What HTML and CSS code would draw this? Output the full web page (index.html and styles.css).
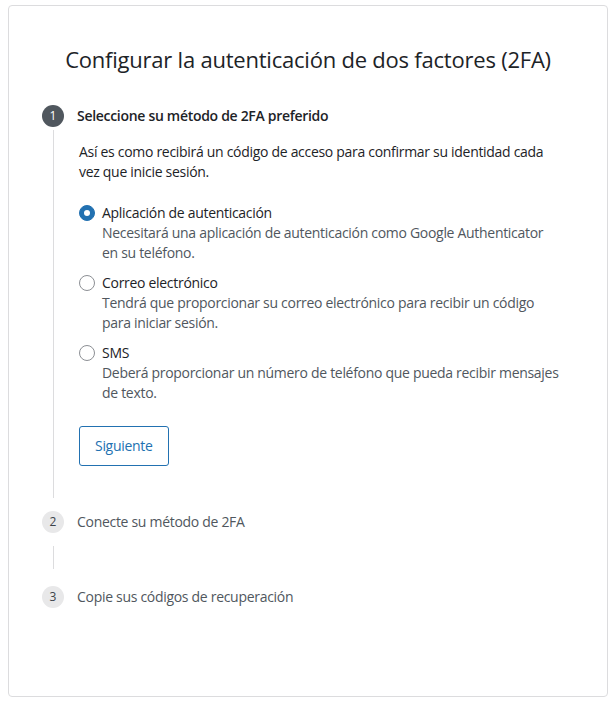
FILE: index.html
```html
<!DOCTYPE html>
<html lang="es">
<head>
  <meta charset="UTF-8">
  <meta name="viewport" content="width=device-width, initial-scale=1.0">
  <title>Configurar 2FA</title>
  <link rel="stylesheet" href="styles.css">
</head>
<body>
  <div class="card">
    <h1 class="card-title">Configurar la autenticación de dos factores (2FA)</h1>

    <ol class="steps">
      <!-- paso activo -->
      <li class="step is-active">
        <div class="step-head">
          <span class="step-num">1</span>
          <span class="step-label">Seleccione su método de 2FA preferido</span>
        </div>
        <div class="step-body">
          <p class="step-intro">Así es como recibirá un código de acceso para confirmar su identidad cada vez que inicie sesión.</p>

          <div class="options">
            <label class="option">
              <input type="radio" name="method" value="app" checked>
              <span class="option-text">
                <span class="option-title">Aplicación de autenticación</span>
                <span class="option-desc">Necesitará una aplicación de autenticación como Google Authenticator en su teléfono.</span>
              </span>
            </label>
            <label class="option">
              <input type="radio" name="method" value="email">
              <span class="option-text">
                <span class="option-title">Correo electrónico</span>
                <span class="option-desc">Tendrá que proporcionar su correo electrónico para recibir un código para iniciar sesión.</span>
              </span>
            </label>
            <label class="option">
              <input type="radio" name="method" value="sms">
              <span class="option-text">
                <span class="option-title">SMS</span>
                <span class="option-desc">Deberá proporcionar un número de teléfono que pueda recibir mensajes de texto.</span>
              </span>
            </label>
          </div>

          <button class="btn-outline" type="button">Siguiente</button>
        </div>
      </li>

      <li class="step">
        <div class="step-head">
          <span class="step-num">2</span>
          <span class="step-label">Conecte su método de 2FA</span>
        </div>
        <div class="step-body step-body--empty"></div>
      </li>

      <li class="step">
        <div class="step-head">
          <span class="step-num">3</span>
          <span class="step-label">Copie sus códigos de recuperación</span>
        </div>
      </li>
    </ol>
  </div>
</body>
</html>
```

FILE: styles.css
```css
* {margin:0; padding:0; box-sizing: border-box;}
body{
  background: #fff;
  color: #1d2327;
  font-family: "Open Sans", "Noto Sans", sans-serif;
  font-size: 14px;
  line-height: 20px;
  letter-spacing: -0.3px;
}
.card{
  margin: 5px 0 0 8px;
  width: 600px;
  height: 692px;
  border: 1px solid #dcdcde;
  border-radius: 4px;
  padding: 37px 0 0 33px;
}
.card-title{
  font-size: 22px;
  font-weight: 400;
  line-height: 32px;
  letter-spacing: -0.22px;
  text-align: center;
  padding-right: 33px;
  margin-bottom: 30px;
}
ol.steps{list-style-type: none;}

/* cabecera de cada paso */
.step-head{
  display: flex;
  align-items: center;
  gap: 13px;
  height: 22px;
}
.step-num{
  width: 22px;
  height: 22px;
  border-radius: 50%;
  background: #e8e8e9;
  color: #3c434a;
  font-size: 12px;
  letter-spacing: 0;
  display: flex;
  justify-content: center;
  align-items: center;
}
.step-label{color: #50575e;}
.is-active .step-num{
  background: #50575e;
  color: #fff;
}
.is-active .step-label{
  color: #1d2327;
  font-weight: 600;
}

/* linea vertical entre pasos */
.step-body{
  margin: 3px 0 13px 11px;
  border-left: 1px solid #dcdcde;
  padding: 12px 0 32px 25px;
  width: 507px;
}
.step-body--empty{
  height: 23px;
  padding: 0;
  margin-top: 13px;
  margin-bottom: 17px;
}

.step-intro{margin-bottom: 21px;}

.options{
  display: flex;
  flex-direction: column;
  gap: 10px;
  margin-bottom: 23px;
}
.option{
  display: flex;
  gap: 7px;
  cursor: pointer;
}
.option input{
  appearance: none;
  flex: none;
  width: 16px;
  height: 16px;
  margin-top: 2px;
  border: 1px solid #8c8f94;
  border-radius: 50%;
  background: #fff;
  display: flex;
  justify-content: center;
  align-items: center;
}
.option input:checked{
  background: #2271b1;
  border-color: #2271b1;
}
.option input:checked::before{
  content: "";
  width: 6px;
  height: 6px;
  border-radius: 50%;
  background: #fff;
}
.option-text{display: flex; flex-direction: column;}
.option-desc{color: #50575e;}

.btn-outline{
  height: 40px;
  padding: 0 15px;
  background: #fff;
  border: 1px solid #2271b1;
  border-radius: 3px;
  color: #2271b1;
  font: inherit;
  letter-spacing: inherit;
  cursor: pointer;
}
```
